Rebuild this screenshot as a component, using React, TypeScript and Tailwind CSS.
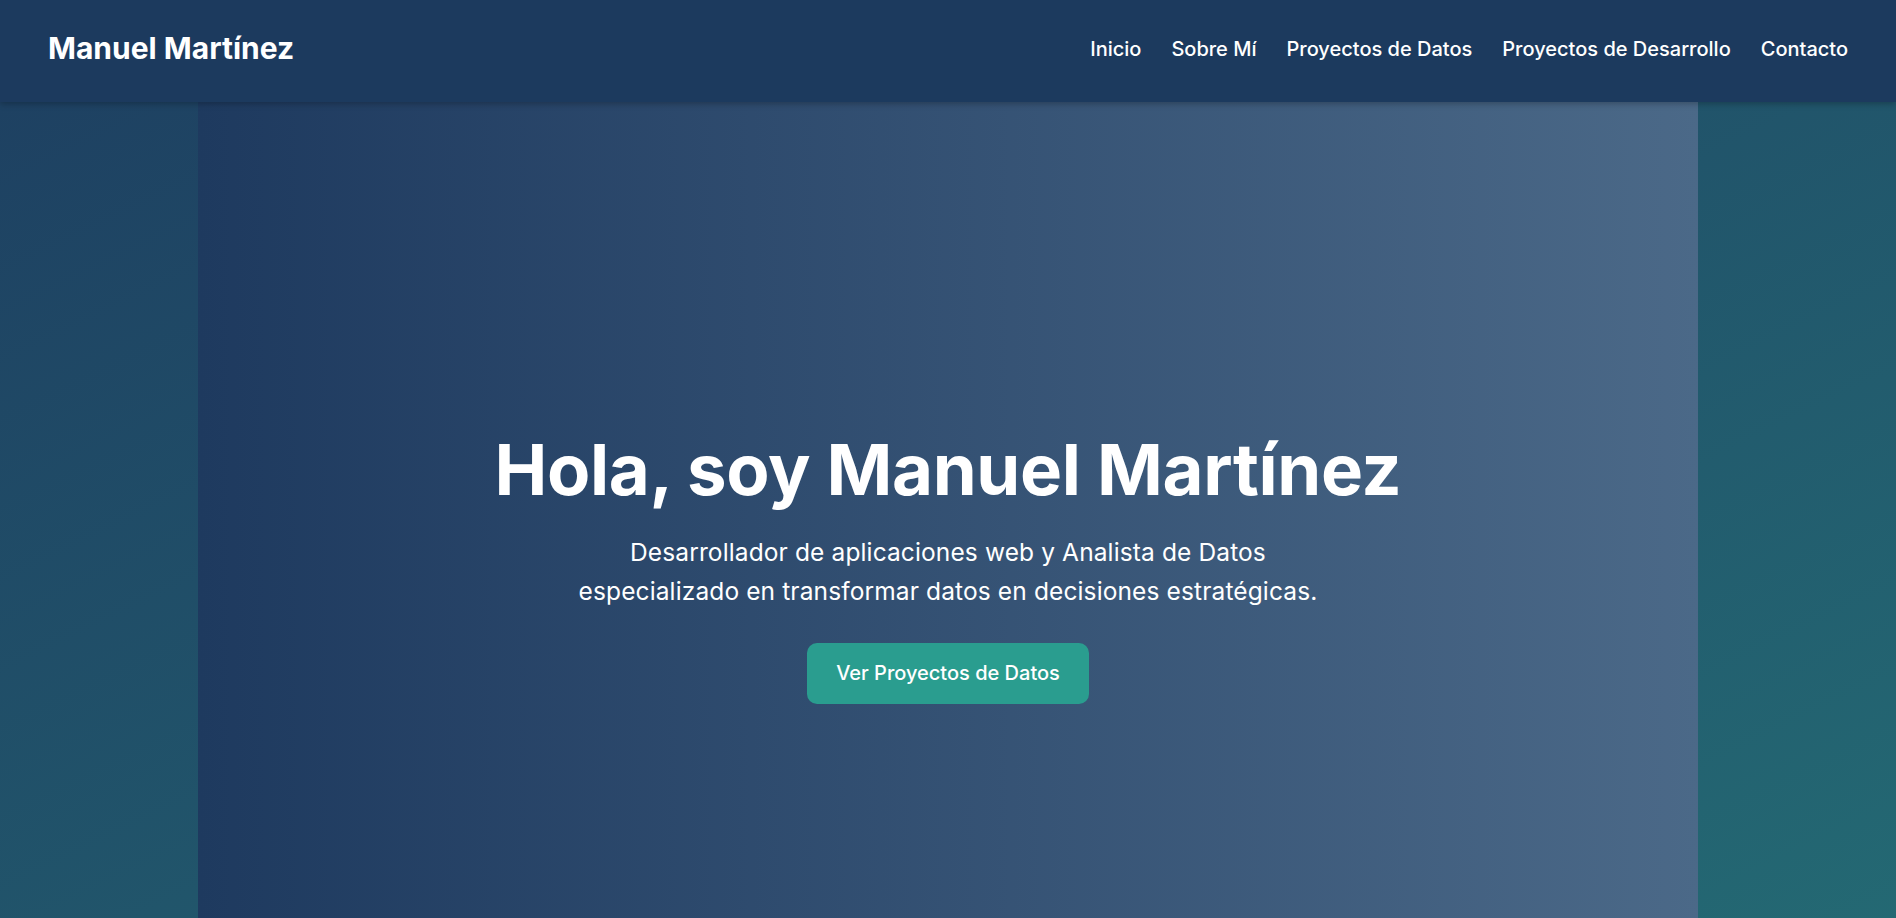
import React from 'react';

const NAV_LINKS = ['Inicio', 'Sobre Mí', 'Proyectos de Datos', 'Proyectos de Desarrollo', 'Contacto'];

export default function App() {
  return (
    <div className="min-h-screen bg-[#1c3a5e] text-white" style={{ fontFamily: 'Inter, "Noto Sans", sans-serif' }}>
      {/* Barra superior */}
      <header className="relative z-10 flex h-[102px] items-center justify-between bg-[#1c3a5e] px-12 pb-[5px] shadow-[0_2px_6px_rgba(0,0,0,0.25)]">
        <a href="#" className="text-[30px] font-bold text-white">
          Manuel Martínez
        </a>
        <nav className="flex items-center gap-[30px]">
          {NAV_LINKS.map((link) => (
            <a key={link} href="#" className="text-[20px] font-medium text-white">
              {link}
            </a>
          ))}
        </nav>
      </header>

      {/* Hero */}
      <section className="bg-gradient-to-br from-[#1e4162] to-[#246b74]">
        <div className="mx-auto flex h-screen max-w-[1500px] flex-col items-center justify-center bg-gradient-to-r from-[#1e3a5f] to-[#4b6988] pt-[10px] text-center">
          <h1 className="mb-[21px] text-[70.7px] font-bold leading-[84px] tracking-[-0.005em]">
            Hola, soy Manuel Martínez
          </h1>
          <p className="mb-[32px] max-w-[770px] text-[24.5px] leading-[39px] tracking-[0.005em]">
            Desarrollador de aplicaciones web y Analista de Datos especializado en transformar datos en decisiones estratégicas.
          </p>
          <a
            href="#"
            className="rounded-[10px] bg-[#2a9d8f] px-[29px] py-[16px] text-[20px] font-medium leading-[29px] text-white"
          >
            Ver Proyectos de Datos
          </a>
        </div>
      </section>
    </div>
  );
}
